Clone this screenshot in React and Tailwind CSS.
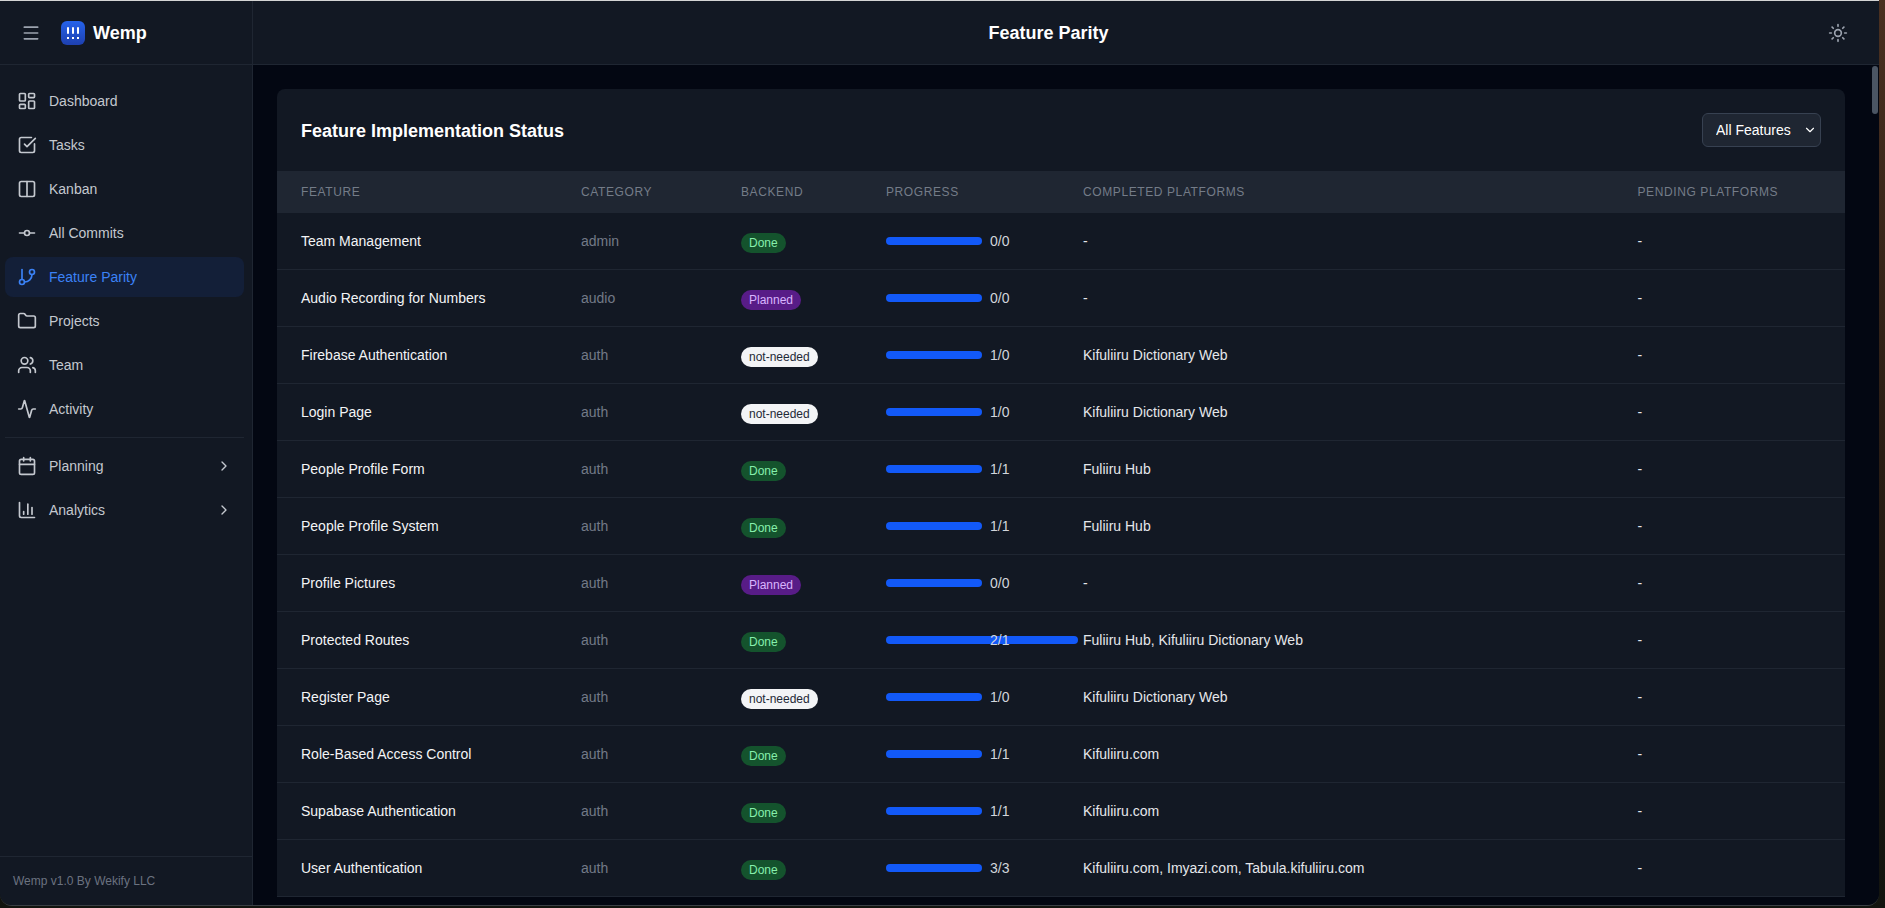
import { Activity, Calendar, ChartColumn, ChevronDown, ChevronRight, Columns2, Folder, GitBranch, GitCommitHorizontal, LayoutDashboard, Menu, SquareCheckBig, Sun, Users } from 'lucide-react';

const mainNav = [
  { name: 'Dashboard', icon: LayoutDashboard },
  { name: 'Tasks', icon: SquareCheckBig },
  { name: 'Kanban', icon: Columns2 },
  { name: 'All Commits', icon: GitCommitHorizontal },
  { name: 'Feature Parity', icon: GitBranch, active: true },
  { name: 'Projects', icon: Folder },
  { name: 'Team', icon: Users },
  { name: 'Activity', icon: Activity }
];

const groupNav = [
  { name: 'Planning', icon: Calendar },
  { name: 'Analytics', icon: ChartColumn }
];

const features = [
  { name: 'Team Management', category: 'admin', backend: 'Done', done: 0, total: 0, completed: '-' },
  { name: 'Audio Recording for Numbers', category: 'audio', backend: 'Planned', done: 0, total: 0, completed: '-' },
  { name: 'Firebase Authentication', category: 'auth', backend: 'not-needed', done: 1, total: 0, completed: 'Kifuliiru Dictionary Web' },
  { name: 'Login Page', category: 'auth', backend: 'not-needed', done: 1, total: 0, completed: 'Kifuliiru Dictionary Web' },
  { name: 'People Profile Form', category: 'auth', backend: 'Done', done: 1, total: 1, completed: 'Fuliiru Hub' },
  { name: 'People Profile System', category: 'auth', backend: 'Done', done: 1, total: 1, completed: 'Fuliiru Hub' },
  { name: 'Profile Pictures', category: 'auth', backend: 'Planned', done: 0, total: 0, completed: '-' },
  { name: 'Protected Routes', category: 'auth', backend: 'Done', done: 2, total: 1, completed: 'Fuliiru Hub, Kifuliiru Dictionary Web' },
  { name: 'Register Page', category: 'auth', backend: 'not-needed', done: 1, total: 0, completed: 'Kifuliiru Dictionary Web' },
  { name: 'Role-Based Access Control', category: 'auth', backend: 'Done', done: 1, total: 1, completed: 'Kifuliiru.com' },
  { name: 'Supabase Authentication', category: 'auth', backend: 'Done', done: 1, total: 1, completed: 'Kifuliiru.com' },
  { name: 'User Authentication', category: 'auth', backend: 'Done', done: 3, total: 3, completed: 'Kifuliiru.com, Imyazi.com, Tabula.kifuliiru.com' }
];

const badgeStyles = {
  Done: 'bg-[#14532d] text-[#86efac]',
  Planned: 'bg-[#581c87] text-[#d8b4fe]',
  'not-needed': 'bg-[#f3f4f6] text-[#1f2937]'
};

function NavItem({ item, hasChevron }) {
  const Icon = item.icon;
  return (
    <a className={`flex h-10 items-center gap-3 rounded-lg px-3 text-sm ${item.active ? 'bg-[#131f38] text-[#3b82f6]' : 'text-[#c4c8cf]'}`}>
      <Icon size={20} className="shrink-0" />
      <span className="flex-1">{item.name}</span>
      {hasChevron && <ChevronRight size={16} />}
    </a>
  );
}

function Sidebar() {
  return (
    <aside className="flex w-[253px] shrink-0 flex-col border-r border-[#1f2632] bg-[#121823]">
      <div className="flex h-16 shrink-0 items-center gap-5 border-b border-[#1f2632] pl-[21px]">
        <Menu size={20} className="text-[#9ca3af]" />
        <div className="flex items-center gap-2">
          <div className="flex h-6 w-6 flex-col items-center justify-center gap-[3px] rounded-md bg-gradient-to-b from-[#2563eb] to-[#1e40af]">
            <div className="flex gap-[3px]">
              <span className="h-[7px] w-[2px] rounded-sm bg-white" />
              <span className="h-[7px] w-[2px] rounded-sm bg-white" />
              <span className="h-[7px] w-[2px] rounded-sm bg-white" />
            </div>
            <div className="flex gap-[3px]">
              <span className="h-[2px] w-[2px] bg-white" />
              <span className="h-[2px] w-[2px] bg-white" />
              <span className="h-[2px] w-[2px] bg-white" />
            </div>
          </div>
          <span className="text-lg font-semibold text-white">Wemp</span>
        </div>
      </div>
      <nav className="flex-1 py-4 pl-[5px] pr-2">
        <div className="space-y-1">
          {mainNav.map((item) => (
            <NavItem key={item.name} item={item} />
          ))}
        </div>
        <div className="my-2 border-t border-[#1f2632]" />
        <div className="space-y-1">
          {groupNav.map((item) => (
            <NavItem key={item.name} item={item} hasChevron />
          ))}
        </div>
      </nav>
      <div className="border-t border-[#1f2632] py-4 pl-[13px] text-xs text-[#6b7280]">Wemp v1.0 By Wekify LLC</div>
    </aside>
  );
}

function FeatureRow({ feature }) {
  // 0/0 and x/0 still render a full bar, and 2/1 runs past its track
  const percent = feature.total > 0 ? (feature.done / feature.total) * 100 : 100;
  const cell = 'border-b border-[#1f2632] px-6';
  return (
    <tr>
      <td className={`${cell} h-[57px] text-[#f3f4f6]`}>{feature.name}</td>
      <td className={`${cell} text-[#737a87]`}>{feature.category}</td>
      <td className={cell}>
        <span className={`inline-flex translate-y-px rounded-full px-2 py-0.5 text-xs ${badgeStyles[feature.backend]}`}>{feature.backend}</span>
      </td>
      <td className={cell}>
        <div className="flex items-center">
          <div className="h-2 w-24 shrink-0 rounded-full">
            <div className="h-2 rounded-full bg-[#1259f8]" style={{ width: `${percent}%` }} />
          </div>
          <span className="relative ml-2 text-[#d1d5db]">
            {feature.done}/{feature.total}
          </span>
        </div>
      </td>
      <td className={`${cell} text-[#e5e7eb]`}>{feature.completed}</td>
      <td className={`${cell} text-[#e5e7eb]`}>-</td>
    </tr>
  );
}

function FeatureTable() {
  return (
    <div className="rounded-t-lg bg-[#121823]">
      <div className="flex h-[82px] items-center justify-between px-6">
        <h2 className="translate-y-px text-lg font-semibold text-white">Feature Implementation Status</h2>
        <div className="relative">
          <select className="block h-[34px] w-[119px] appearance-none rounded-md border border-[#374151] bg-[#1f2632] pl-[13px] pr-5 text-sm text-white">
            <option>All Features</option>
            <option>Done</option>
            <option>Planned</option>
          </select>
          <ChevronDown size={14} className="pointer-events-none absolute right-1 top-[10px] text-white" />
        </div>
      </div>
      <table className="w-full table-fixed border-separate border-spacing-0 text-left text-sm">
        <thead className="bg-[#1f2632] text-xs uppercase tracking-wider text-[#747c88]">
          <tr className="h-[42px]">
            <th className="w-[280px] px-6 font-normal">Feature</th>
            <th className="w-[160px] px-6 font-normal">Category</th>
            <th className="w-[145px] px-6 font-normal">Backend</th>
            <th className="w-[197px] px-6 font-normal">Progress</th>
            <th className="w-[554.5px] px-6 font-normal">Completed Platforms</th>
            <th className="px-6 font-normal">Pending Platforms</th>
          </tr>
        </thead>
        <tbody>
          {features.map((feature) => (
            <FeatureRow key={feature.name} feature={feature} />
          ))}
        </tbody>
      </table>
    </div>
  );
}

export default function App() {
  return (
    <div className="h-screen w-full overflow-hidden bg-gradient-to-b from-[#4a3020] via-[#2a1d14] to-[#12140f] font-['Liberation_Sans',sans-serif]">
      <div className="h-px w-[1879px] bg-[#d4d4d4]" />
      <div className="flex h-[905px] w-[1879px] overflow-hidden rounded-b-xl border-b border-[#3a3f45]">
        <Sidebar />
        <div className="flex min-w-0 flex-1 flex-col">
          <header className="flex h-16 shrink-0 items-center border-b border-[#1f2632] bg-[#121823] pl-6 pr-[23px]">
            <h1 className="flex-1 text-center text-lg font-semibold text-white">Feature Parity</h1>
            <button className="p-2 text-[#9ca3af]">
              <Sun size={20} />
            </button>
          </header>
          <main className="relative min-h-0 flex-1 overflow-hidden bg-[#030712] pb-0 pl-6 pr-[34px] pt-6">
            <FeatureTable />
            <div className="absolute right-px top-px h-12 w-1.5 rounded-full bg-[#4b5563]" />
          </main>
        </div>
      </div>
    </div>
  );
}
